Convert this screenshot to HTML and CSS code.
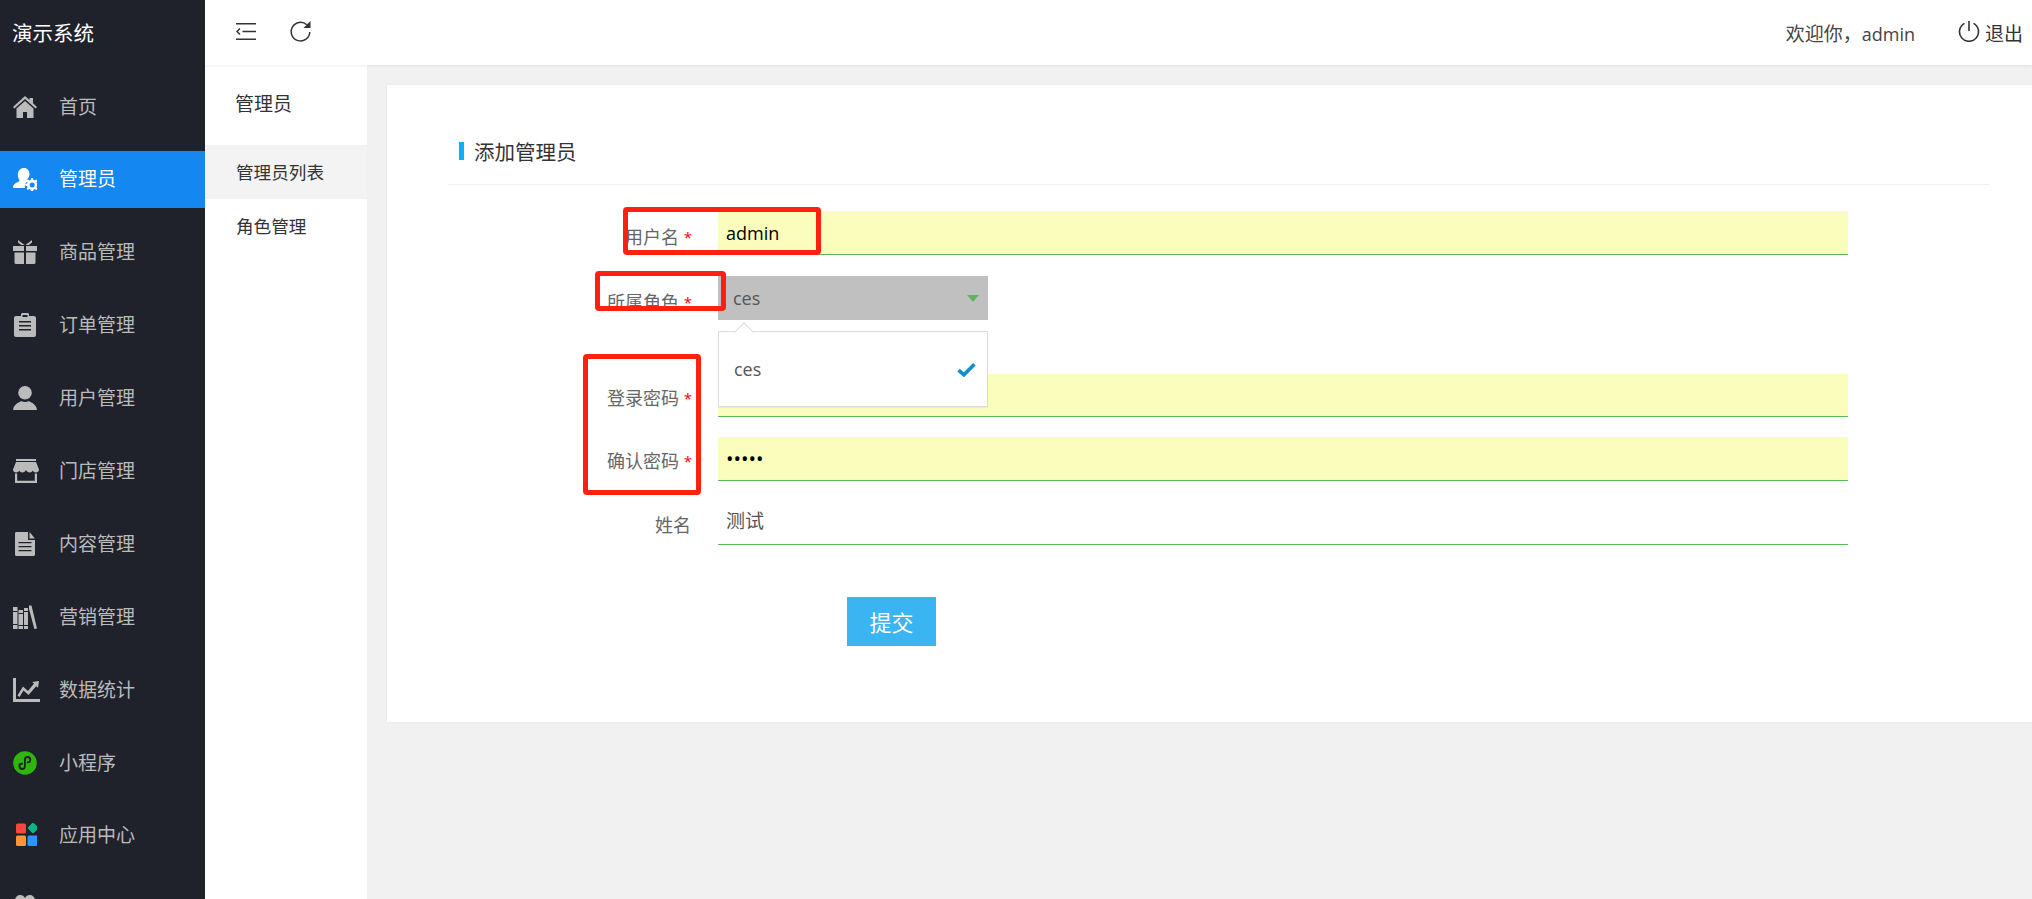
FILE: index.html
```html
<!DOCTYPE html>
<html lang="zh-CN">
<head>
<meta charset="utf-8">
<title>添加管理员</title>
<link rel="stylesheet" href="styles.css">
</head>
<body>
<div class="app">
  <aside class="sidebar">
    <div class="logo">演示系统</div>
    <nav class="nav">
      <a class="nav-item"><svg class="ico" viewBox="0 0 24 24"><path d="M12 1 0 12l1.4 1.6L12 4l10.6 9.6L24 12l-4-3.7V3h-3.5v2.1z"/><path d="M12 6 3.5 13.6V23H10v-6h4v6h6.500v-9.400z"/></svg><span>首页</span></a>
      <a class="nav-item active"><svg class="ico" viewBox="0 0 24 24"><path d="M11 1c3.300 0 5.500 2.700 5.500 6 0 2.200-.9 4-2.300 5.300l.9 1.400a7 7 0 0 0-3.100 7.300H1c-1 0-1-.8-.9-1.500.4-1.800 2-3.200 4.400-4.200 1.600-.7 2-1.400 2-2.300-1.100-1.200-1.700-3.500-1.700-6 0-3.300 2.900-6 6.200-6z"/><path fill-rule="evenodd" d="m18.300 11 1.700.1.400 1.700 1.300.6 1.500-.9 1.200 1.200-.9 1.500.6 1.300 1.700.4v1.700l-1.700.4-.6 1.300.9 1.500-1.200 1.200-1.500-.9-1.300.6-.4 1.700H18l-.4-1.700-1.300-.6-1.500.9-1.200-1.200.9-1.500-.6-1.300-1.700-.4v-1.700l1.700-.4.6-1.300-.9-1.500 1.200-1.200 1.500.9 1.300-.6zm.9 4.600a2.500 2.500 0 1 0 0 5 2.500 2.500 0 0 0 0-5z"/></svg><span>管理员</span></a>
      <a class="nav-item"><svg class="ico" viewBox="0 0 24 24"><path d="M0 6h11v5H0zM13 6h11v5H13zM1.500 12.500H11V24H3a1.500 1.500 0 0 1-1.500-1.500zM13 12.500h9.500v10A1.500 1.500 0 0 1 21 24h-8z"/><path d="M5 0l6.500 5H8.200L5 2.500zM19 0l-6.500 5h3.300L19 2.500z"/></svg><span>商品管理</span></a>
      <a class="nav-item"><svg class="ico" viewBox="0 0 24 24"><path d="M3 3h5V1.500C8 .7 8.700 0 9.500 0h5c.8 0 1.500.7 1.500 1.500V3h5c1.100 0 2 .9 2 2v17c0 1.100-.9 2-2 2H3c-1.100 0-2-.9-2-2V5c0-1.100.9-2 2-2z"/><path class="ico-cut" d="M9.500 2h5v2h-5zM6 8h12v1.500H6zM6 12h12v1.500H6zM6 16h12v1.500H6z"/></svg><span>订单管理</span></a>
      <a class="nav-item"><svg class="ico" viewBox="0 0 24 24"><circle cx="12" cy="6.800" r="6.800"/><path d="M0 24c.4-4 3-6.500 6-7.800 1.500-.7 2-1 2-1.200 1.200.7 2.600 1 4 1s2.800-.3 4-1c0 .2.500.5 2 1.200 3 1.300 5.600 3.800 6 7.800z"/></svg><span>用户管理</span></a>
      <a class="nav-item"><svg class="ico ico-wide" viewBox="0 0 26 24"><path d="M3 0h20v2H3zM3 3h20l3 7.500c0 1.800-1.400 3-3.200 3-1.400 0-2.600-.8-3-2-.5 1.200-1.600 2-3.200 2-1.500 0-2.600-.8-3.100-2h-1c-.5 1.200-1.600 2-3.100 2-1.600 0-2.700-.8-3.200-2-.4 1.200-1.600 2-3 2C1.400 13.500 0 12.300 0 10.500z"/><path d="M2 14.500h2.200V21.800h17.600V14.500H24V24H2z"/></svg><span>门店管理</span></a>
      <a class="nav-item"><svg class="ico" viewBox="0 0 24 24"><path d="M3.500 0H15v8h7v14.500c0 .8-.7 1.500-1.500 1.500h-17C2.700 24 2 23.300 2 22.500v-21C2 .7 2.700 0 3.500 0zM16.500 0 22 6.500h-5.500z"/><path class="ico-cut" d="M5.500 10H18.500v1.300H5.500zM5.500 14H18.500v1.300H5.500zM5.500 18H18.500v1.300H5.500z"/></svg><span>内容管理</span></a>
      <a class="nav-item"><svg class="ico" viewBox="0 0 24 24"><path d="M0 2h4.500v22H0zM5.500 5H10v19H5.500zM11 3h4v21h-4zM16 .5h2.500L24 23.500l-2.600.5-5.400-20z"/><path class="ico-cut" d="M0 6h4.500v1H0zM0 19h4.500v1H0zM5.500 8H10v1H5.500zM5.500 20H10v1H5.500zM11 6h4v1h-4zM11 20h4v1h-4z"/></svg><span>营销管理</span></a>
      <a class="nav-item"><svg class="ico ico-chart" viewBox="0 0 27 24"><path d="M0 0h3v21h24v3H0z"/><path d="M4.500 17.500 10 8.500l5 4.500 6-7.500-1.800-1.500L26 3l-1 6.800-1.800-1.600L15.500 17l-5-4.500-4 6.500z"/></svg><span>数据统计</span></a>
      <a class="nav-item"><svg class="ico" viewBox="0 0 24 24"><circle class="mini-bg" cx="12" cy="12" r="11.800"/><path class="mini-link" d="M6.500 13.500v1.800a2.700 2.700 0 0 0 5.400 0V8.700a2.700 2.700 0 0 1 5.400 0c0 1.700-1.200 2.700-2.700 2.700M9.300 12.600c-1.500 0-2.800.9-2.800 2.700"/></svg><span>小程序</span></a>
      <a class="nav-item"><svg class="ico" viewBox="0 0 24 24"><rect class="c-red" x="3" y="0.500" width="10" height="10" rx="1.500"/><rect class="c-green" x="16" y="1" width="8" height="8" rx="1" transform="rotate(45 20 5)"/><rect class="c-orange" x="3" y="12.500" width="10" height="10.500" rx="1.500"/><rect class="c-blue" x="14.500" y="12.500" width="10" height="10.500" rx="1.500"/></svg><span>应用中心</span></a>
      <a class="nav-item"><svg class="ico ico-love" viewBox="0 0 24 24"><path d="M12 24 3 13C0 9 1-1 7-1c2.500 0 4 1 5 3 1-2 2.500-3 5-3 6 0 7 10 4 14z"/></svg></a>
    </nav>
  </aside>

  <div class="main">
    <header class="topbar">
      <div class="tools">
        <svg class="tool-menu" viewBox="0 0 20 17"><path d="M0 .75h20M6.500 8.500H20M0 16.250h20M4 5.500 1 8.500l3 3"/></svg>
        <svg class="tool-refresh" viewBox="0 0 21 21"><path class="stroke" d="M16.800 3.800A9.300 9.300 0 1 0 19.800 11"/><path class="fill" d="M20.500 0v7h-7z"/></svg>
      </div>
      <div class="account">
        <span class="welcome"><span class="welcome-cjk">欢迎你，</span>admin</span>
        <span class="logout"><svg class="power" viewBox="0 0 22 22"><path d="M11 1v10M6.500 3.400a9.500 9.500 0 1 0 9 0"/></svg>退出</span>
      </div>
    </header>

    <div class="body">
      <aside class="subnav">
        <div class="subnav-title">管理员</div>
        <a class="subnav-item current">管理员列表</a>
        <a class="subnav-item">角色管理</a>
      </aside>

      <section class="content">
        <div class="card">
          <h2 class="card-title"><span class="title-bar"></span>添加管理员</h2>
          <form class="form">
            <div class="row row-user">
              <label class="label">用户名 <i class="req">*</i></label>
              <input class="input filled" type="text" value="admin">
            </div>
            <div class="row row-role">
              <label class="label">所属角色 <i class="req">*</i></label>
              <div class="select"><span>ces</span><b class="caret"></b></div>
              <div class="dropdown">
                <span class="dropdown-arrow"></span>
                <div class="option"><span>ces</span>
                  <svg class="check" viewBox="0 0 18 14"><path d="M1.500 7.500 6.500 12 16.500 2"/></svg>
                </div>
              </div>
            </div>
            <div class="row row-pass">
              <label class="label">登录密码 <i class="req">*</i></label>
              <input class="input filled secret" type="password" value="12345">
            </div>
            <div class="row row-confirm">
              <label class="label">确认密码 <i class="req">*</i></label>
              <input class="input filled secret" type="password" value="12345">
            </div>
            <div class="row row-name">
              <label class="label">姓名</label>
              <input class="input plain" type="text" value="测试">
            </div>
            <div class="actions"><button class="submit" type="button">提交</button></div>

            <span class="mark mark-user"></span>
            <span class="mark mark-role"></span>
            <span class="mark mark-pass"></span>
          </form>
        </div>
      </section>
    </div>
  </div>
</div>
</body>
</html>
```

FILE: styles.css
```css
* { box-sizing: border-box; }
html, body { height: 100%; }
body {
  margin: 0;
  overflow: hidden;
  background: #f1f1f1;
  color: #333;
  font-family: "Open Sans", "Noto Sans CJK SC", sans-serif;
  font-size: 18px;
}
.app { display: flex; height: 899px; overflow: hidden; }

/* sidebar */
.sidebar { flex: 0 0 205px; background: #1f222b; overflow: hidden; }
.logo { height: 65px; padding: 20px 0 0 12px; font-size: 20.500px; line-height: 26px; color: #fff; }
.nav { display: flex; flex-direction: column; gap: 15.9px; padding-top: 13px; }
.nav-item { display: flex; flex: 0 0 57px; align-items: center; padding-left: 13px; color: #bbb; font-size: 19px; line-height: 24px; }
.nav-item span { margin-left: 22px; }
.nav-item.active { background: #1488f0; color: #fff; }
.ico { flex: 0 0 24px; width: 24px; height: 24px; fill: #bbb; }
.active .ico { fill: #fff; }
.ico-wide { flex-basis: 26px; width: 26px; margin-right: -2px; }
.ico-chart { flex-basis: 27px; width: 27px; margin-right: -3px; }
.ico-love { overflow: visible; }
.ico-cut { fill: #1f222b; }
.mini-bg { fill: #2fb50e; }
.mini-link { fill: none; stroke: #1f222b; stroke-width: 1.800; stroke-linecap: round; }
.c-red { fill: #f9463f; }
.c-green { fill: #10b387; }
.c-orange { fill: #ff9433; }
.c-blue { fill: #2b95fb; }

/* main */
.main { flex: 1; min-width: 0; display: flex; flex-direction: column; }
.topbar {
  position: relative;
  z-index: 2;
  flex: 0 0 65px;
  display: flex;
  justify-content: space-between;
  align-items: center;
  background: #fff;
  box-shadow: 0 1px 3px rgba(0, 0, 0, .07);
}
.tools { display: flex; align-items: center; gap: 34px; padding: 0 0 3px 31px; }
.tool-menu { width: 20px; height: 17px; fill: none; stroke: #333; stroke-width: 1.500; }
.tool-refresh { width: 21px; height: 21px; }
.tool-refresh .stroke { fill: none; stroke: #333; stroke-width: 1.500; }
.tool-refresh .fill { fill: #333; }
.account { display: flex; align-items: center; gap: 43px; padding-right: 9px; color: #444; }
.welcome-cjk { font-size: 19px; }
.logout { display: flex; align-items: center; gap: 5px; color: #333; font-size: 19px; }
.power { width: 22px; height: 22px; margin-top: -3px; fill: none; stroke: #333; stroke-width: 1.600; }

.body { flex: 1; display: flex; min-height: 0; }
.subnav { flex: 0 0 162px; background: #fff; }
.subnav-title { height: 80px; padding: 25px 0 0 30px; font-size: 19px; line-height: 28px; }
.subnav-item { display: block; height: 54px; padding-left: 31px; font-size: 17.600px; line-height: 54px; }
.subnav-item.current { background: #f3f3f3; }

.content { flex: 1; min-width: 0; padding: 20px 0 0 20px; }
.card { height: 637px; padding: 0 42px 0 61px; background: #fff; box-shadow: 0 0 4px rgba(0, 0, 0, .04); }
.card-title {
  display: flex;
  align-items: center;
  height: 100px;
  margin: 0;
  padding: 33px 0 0 11px;
  border-bottom: 1px solid #eef0f3;
  font-size: 20.500px;
  font-weight: 400;
  color: #333;
}
.title-bar { width: 5px; height: 18px; margin-right: 10px; background: #0eaef5; }

/* form */
.form { position: relative; padding-top: 26px; }
.row { position: relative; display: flex; height: 44px; margin-right: 142px; }
.row-role { margin-top: 21px; }
.row-pass { height: 43px; margin-top: 54px; }
.row-confirm { margin-top: 20px; }
.row-name { margin-top: 20px; }
.label { flex: 0 0 270px; padding-right: 26px; color: #666; text-align: right; line-height: 50px; }
.row-user .label, .row-role .label { line-height: 52px; }
.row-pass .label, .row-confirm .label { line-height: 48px; }
.row-name .label { padding-right: 27px; line-height: 49px; }
.req { color: #f00; font-style: normal; font-size: 15px; vertical-align: 1px; }
.input {
  flex: 1;
  min-width: 0;
  padding: 0 8px;
  border: 0;
  border-bottom: 1px solid #5cb85c;
  border-radius: 0;
  outline: 0;
  background: #fff;
  color: #555;
  font: inherit;
}
.input.filled { background: #fafdbb; color: #000; }
.input.secret { font-size: 20px; }
.input.plain { padding-bottom: 5px; font-size: 19px; }
.select {
  flex: 0 0 270px;
  display: flex;
  justify-content: space-between;
  align-items: center;
  padding: 0 9px 0 15px;
  background: #c0c0c0;
  color: #555;
}
.caret { width: 0; height: 0; border: 6px solid transparent; border-top: 7px solid #5cb85c; border-bottom: 0; }
.dropdown {
  position: absolute;
  z-index: 3;
  left: 270px;
  top: 55px;
  width: 270px;
  height: 76px;
  border: 1px solid #ddd;
  background: #fff;
  box-shadow: 0 1px 1px rgba(0, 0, 0, .05);
}
.dropdown-arrow {
  position: absolute;
  left: 18px;
  top: -7px;
  width: 14px;
  height: 14px;
  border: 1px solid #ddd;
  border-width: 1px 0 0 1px;
  background: #fff;
  transform: rotate(45deg);
}
.option { display: flex; justify-content: space-between; align-items: center; height: 74px; padding: 0 11px 0 15px; color: #555; }
.check { width: 19px; height: 15px; fill: none; stroke: #0e90d2; stroke-width: 3.500; }
.actions { padding: 52px 0 0 399px; }
.submit {
  width: 89px;
  height: 49px;
  padding: 0 0 2px;
  border: 0;
  background: #3bb4f2;
  color: #fff;
  font: inherit;
  font-size: 22px;
}

/* red annotations drawn on the screenshot */
.mark { position: absolute; z-index: 4; border: 5px solid #ff2010; border-radius: 4px; pointer-events: none; }
.mark-user { left: 175px; top: 22px; width: 198px; height: 48px; }
.mark-role { left: 147px; top: 86px; width: 131px; height: 40px; }
.mark-pass { left: 135px; top: 169px; width: 118px; height: 141px; }
```
